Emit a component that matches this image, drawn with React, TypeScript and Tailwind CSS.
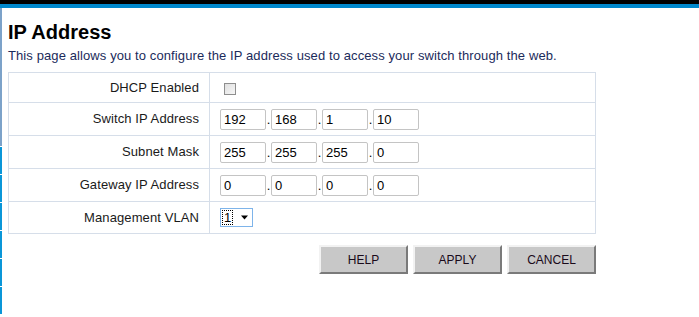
import React from "react"

const font = { fontFamily: "Tahoma, 'Liberation Sans', Arial, sans-serif" }

function IpInputs({ values }: { values: string[] }) {
  return (
    <div className="flex items-center">
      {values.map((v, i) => (
        <React.Fragment key={i}>
          {i > 0 && <span className="w-[5px] text-center text-[13px] leading-none text-black">.</span>}
          <input
            defaultValue={v}
            className="h-[21px] w-[46px] rounded-[2px] border border-[#c4c4c4] bg-white px-[3px] text-[13px] text-black outline-none"
            style={font}
          />
        </React.Fragment>
      ))}
    </div>
  )
}

function Row({ label, children, h }: { label: string; children: React.ReactNode; h: string }) {
  return (
    <div className={`flex border-b border-[#d6dee9] last:border-b-0 ${h}`}>
      <div className="flex w-[201px] items-center justify-end border-r border-[#d6dee9] pr-[10px] text-[13px] tracking-[0.1px] text-[#1a1a1a]">
        {label}
      </div>
      <div className="flex flex-1 items-center pl-[10px]">{children}</div>
    </div>
  )
}

function Btn({ label }: { label: string }) {
  return (
    <button
      className="h-[29px] w-[89px] border-2 border-t-[#f2f2f2] border-l-[#f2f2f2] border-r-[#7a7a7a] border-b-[#7a7a7a] bg-[#c8c8c8] text-[12px] text-[#1a0a1a]"
      style={font}
    >
      {label}
    </button>
  )
}

export default function App() {
  return (
    <div className="h-[317px] w-[699px] overflow-hidden bg-white" style={font}>
      <div className="h-[4px] bg-black" />
      <div className="h-[4px] bg-[#0088cc]" />
      <div className="flex">
        {/* left frame edge */}
        <div className="flex w-[2px] flex-col gap-[1px]">
          <div className="h-[138px] bg-[#7ca2c9]" />
          {[0, 1, 2, 3, 4, 5].map((i) => (
            <div key={i} className="h-[27px] bg-[#0a96d8]" />
          ))}
        </div>
        <div className="flex-1 pl-[6px] pt-[12px]">
          <h1 className="text-[20px] font-bold leading-[24px] text-black" style={{ fontFamily: "'Liberation Sans', Arial, sans-serif" }}>
            IP Address
          </h1>
          <p className="mt-[4px] text-[13px] leading-[16px] tracking-[0.1px] text-[#1b2b5b]">
            This page allows you to configure the IP address used to access your switch through the web.
          </p>
          <div className="mt-[8px] w-[588px] border border-[#d6dee9]">
            <Row label="DHCP Enabled" h="h-[30px]">
              <div className="ml-[4px] mt-[2px] h-[12px] w-[12px] border border-[#8e8e8e] bg-gradient-to-br from-[#e0e0e0] to-[#f6f6f6]" />
            </Row>
            <Row label="Switch IP Address" h="h-[33px]">
              <IpInputs values={["192", "168", "1", "10"]} />
            </Row>
            <Row label="Subnet Mask" h="h-[33px]">
              <IpInputs values={["255", "255", "255", "0"]} />
            </Row>
            <Row label="Gateway IP Address" h="h-[33px]">
              <IpInputs values={["0", "0", "0", "0"]} />
            </Row>
            <Row label="Management VLAN" h="h-[31px]">
              <div className="flex h-[19px] w-[33px] items-center border border-[#7eb4ea] bg-white">
                <span className="ml-[1px] flex h-[15px] w-[11px] items-center justify-center border border-dotted border-black text-[13px] leading-none text-black">
                  1
                </span>
                <svg width="9" height="5" viewBox="0 0 9 5" className="ml-[7px]">
                  <path d="M1 0.5h7L4.5 4.5z" fill="#000" />
                </svg>
              </div>
            </Row>
          </div>
          <div className="mt-[11px] flex w-[588px] justify-end gap-[5px]">
            <Btn label="HELP" />
            <Btn label="APPLY" />
            <Btn label="CANCEL" />
          </div>
        </div>
      </div>
    </div>
  )
}
